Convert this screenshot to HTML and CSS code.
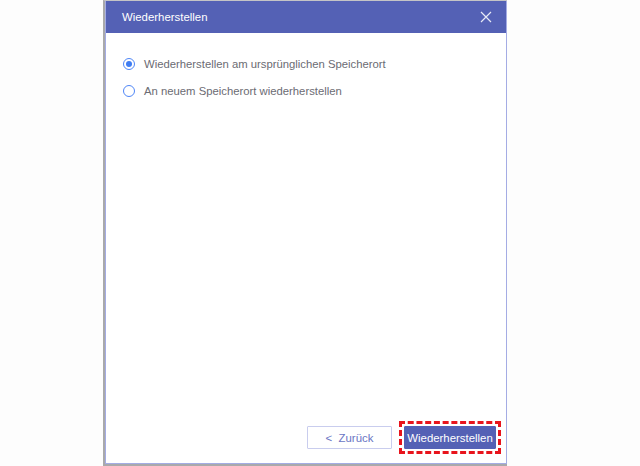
FILE: index.html
```html
<!DOCTYPE html>
<html lang="de">
<head>
    <meta charset="UTF-8">
    <meta name="viewport" content="width=device-width, initial-scale=1.0">
    <title>Wiederherstellen</title>
    <link rel="stylesheet" href="styles.css">
</head>
<body>
    <div class="frame">
        <div class="dialog">
            <div class="dialog-header">
                <span class="dialog-title">Wiederherstellen</span>
                <svg class="close" width="12" height="12" viewBox="0 0 12 12">
                    <path d="M1 1 L11 11 M11 1 L1 11" stroke="#e8eaf6" stroke-width="1.2" fill="none"/>
                </svg>
            </div>
            <div class="dialog-body">
                <label class="option">
                    <span class="radio checked"></span>
                    Wiederherstellen am ursprünglichen Speicherort
                </label>
                <label class="option">
                    <span class="radio"></span>
                    An neuem Speicherort wiederherstellen
                </label>
            </div>
            <div class="dialog-footer">
                <button class="btn btn-back">&lt;&nbsp; Zurück</button>
                <span class="highlight">
                    <button class="btn btn-primary">Wiederherstellen</button>
                </span>
            </div>
        </div>
    </div>
</body>
</html>
```

FILE: styles.css
```css
body {
    margin: 0;
    background-color: #fdfdfd;
    font-family: "Liberation Sans", Arial, sans-serif;
}
.frame {
    margin-left: 103px;
    width: 404px;
    height: 466px;
    box-sizing: border-box;
    border-left: 2px solid #a9a9ab;
    border-top: 1px solid #c4c4c6;
    border-bottom: 2px solid #a9a9ab;
}
.dialog {
    height: 100%;
    box-sizing: border-box;
    border: 1px solid #a4ace4;
    border-top: none;
    background: #fff;
    display: flex;
    flex-direction: column;
}
.dialog-header {
    height: 32px;
    background-color: #5461b5;
    display: flex;
    align-items: center;
    justify-content: space-between;
    padding: 0 14px 0 16px;
}
.dialog-title {
    color: #fff;
    font-size: 11.4px;
}
.close {
    display: block;
}
.dialog-body {
    flex: 1;
    padding: 23px 16px 0 16px;
}
.option {
    display: flex;
    align-items: center;
    height: 16px;
    margin-bottom: 11px;
    color: #6b6b73;
    font-size: 11.3px;
}
.radio {
    width: 10px;
    height: 10px;
    border: 1px solid #4f86f7;
    border-radius: 50%;
    margin-right: 9px;
    margin-left: 1px;
    position: relative;
    background: #fff;
}
.radio.checked::after {
    content: "";
    position: absolute;
    left: 2px;
    top: 2px;
    width: 6px;
    height: 6px;
    border-radius: 50%;
    background: #3f7cf2;
}
.dialog-footer {
    display: flex;
    justify-content: flex-end;
    align-items: center;
    gap: 7px;
    padding: 0 5px 9px 0;
}
.btn {
    font-family: "Liberation Sans", Arial, sans-serif;
    font-size: 11.4px;
    height: 23px;
    box-sizing: border-box;
    border-radius: 1px;
    cursor: pointer;
}
.btn-back {
    width: 85px;
    background: #fff;
    color: #6a75c4;
    border: 1px solid #c9cdee;
}
.highlight {
    display: inline-block;
    border: 3px dashed #e8141c;
    padding: 2px;
}
.btn-primary {
    display: block;
    width: 92px;
    padding: 0;
    background: #5461b5;
    color: #fff;
    border: 1px solid #5461b5;
}
```
